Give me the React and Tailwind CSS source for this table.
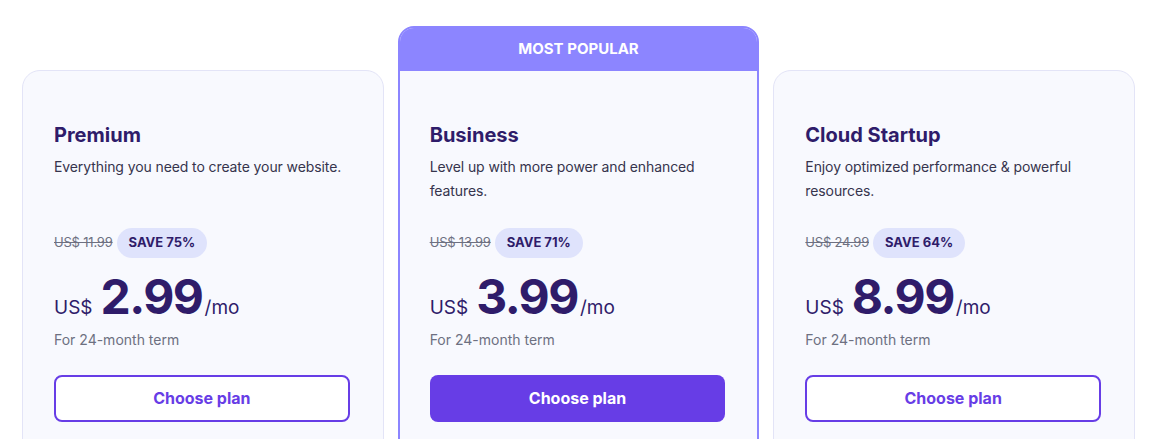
const plans = [
    {
        name: 'Premium',
        desc: 'Everything you need to create your website.',
        oldPrice: 'US$ 11.99',
        save: 'SAVE 75%',
        price: '2.99',
    },
    {
        name: 'Business',
        desc: 'Level up with more power and enhanced features.',
        oldPrice: 'US$ 13.99',
        save: 'SAVE 71%',
        price: '3.99',
        popular: true,
    },
    {
        name: 'Cloud Startup',
        desc: 'Enjoy optimized performance & powerful resources.',
        oldPrice: 'US$ 24.99',
        save: 'SAVE 64%',
        price: '8.99',
    },
];

const PlanBody = ({ plan }) => (
    <div className="pl-[31px] pr-[33px] pt-[50px] pb-10">
        <h3 className="text-[20px] leading-7 font-bold text-[#2f1c6a]">{plan.name}</h3>
        <p className="mt-1.5 min-h-[48px] text-[14px] leading-6 text-[#36344d] tracking-[-0.1px]">{plan.desc}</p>

        <div className="mt-[25px] flex items-center gap-1">
            <span className="text-[13px] text-[#6d7081] line-through tracking-[-0.2px]">{plan.oldPrice}</span>
            <span className="h-[30px] px-3 rounded-full bg-[#dfe3fc] text-[#2f1c6a] text-[13px] font-bold flex items-center">
                {plan.save}
            </span>
        </div>

        <div className="mt-[15px] flex items-baseline text-[#2f1c6a]">
            <span className="text-[19px] mr-2">US$</span>
            <span className="text-[48px] leading-[48px] font-bold tracking-[-1.5px]">{plan.price}</span>
            <span className="text-[19px] ml-0.5">/mo</span>
        </div>
        <p className="mt-[7px] text-[14px] leading-5 text-[#6d7081]">For 24-month term</p>

        {plan.popular ? (
            <button className="mt-[25px] w-full h-[47px] rounded-lg bg-[#673de6] text-white text-[16px] font-bold">
                Choose plan
            </button>
        ) : (
            <button className="mt-[25px] w-full h-[47px] rounded-lg border-2 border-[#673de6] bg-white text-[#673de6] text-[16px] font-bold">
                Choose plan
            </button>
        )}
    </div>
);

const App = () => {
    return (
        <div className="bg-white min-h-screen pl-[22px] pr-[19px] pt-[26px] font-['Inter','Noto_Sans',sans-serif]">
            <div className="grid grid-cols-3 gap-[14px]">
                {plans.map(plan =>
                    plan.popular ? (
                        <div key={plan.name} className="rounded-[16px] border-2 border-[#8c85ff] bg-[#f8f9fe] overflow-hidden">
                            <div className="h-[43px] bg-[#8c85ff] flex items-center justify-center text-white text-[15px] font-bold">
                                MOST POPULAR
                            </div>
                            <div className="-mx-[1px]">
                                <PlanBody plan={plan} />
                            </div>
                        </div>
                    ) : (
                        <div key={plan.name} className="mt-[44px] rounded-[18px] border border-[#e3e4f7] bg-[#f8f9fe]">
                            <PlanBody plan={plan} />
                        </div>
                    )
                )}
            </div>
        </div>
    );
};

export default App;
